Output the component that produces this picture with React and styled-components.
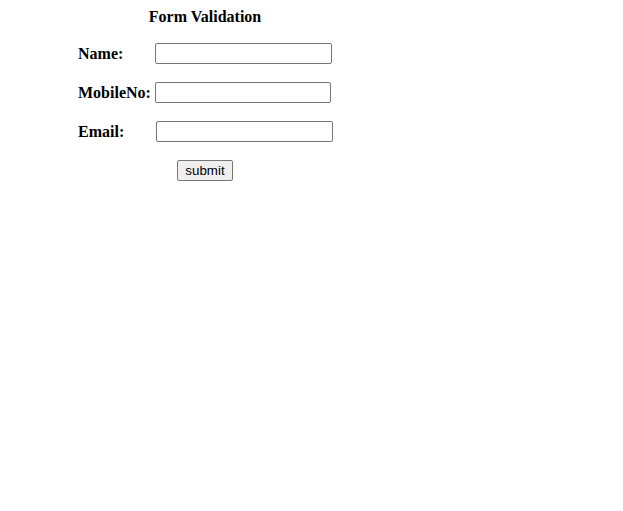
import React, { useState } from "react";
import styled, { createGlobalStyle } from "styled-components";

const GlobalStyle = createGlobalStyle`
  body {
    margin: 8px;
    background: #fff;
    font-family: "Liberation Serif", "Times New Roman", serif;
    color: #000;
  }
`;

const Form = styled.form`
  display: flex;
  flex-direction: column;
  width: 254px;
  margin-left: 70px;
`;

const Title = styled.h4`
  margin: 0 0 17px;
  font-size: 16px;
  line-height: 18px;
  font-weight: bold;
  text-align: center;
`;

const Rows = styled.div`
  display: flex;
  flex-direction: column;
  gap: 18px;
`;

const Row = styled.div`
  display: flex;
  align-items: center;
`;

const Label = styled.label`
  width: ${(p) => p.width}px;
  flex-shrink: 0;
  font-size: 16px;
  font-weight: bold;
  white-space: nowrap;
`;

const Input = styled.input`
  box-sizing: border-box;
  width: ${(p) => p.size}px;
  flex-shrink: 0;
  height: 21px;
  margin: 0;
  padding: 1px 2px;
  border: 1px solid #767676;
  border-radius: 2px;
  background: #fff;
  font-family: "Liberation Sans", Arial, sans-serif;
  font-size: 13.33px;
  outline: none;
`;

const Submit = styled.button`
  align-self: center;
  margin-top: 18px;
  box-sizing: border-box;
  height: 21px;
  width: 56px;
  padding: 1px 6px;
  border: 1px solid #767676;
  border-radius: 2px;
  background: #efefef;
  color: #000;
  font-family: "Liberation Sans", Arial, sans-serif;
  font-size: 13.33px;
  cursor: pointer;
`;

const fields = [
  { name: "name", label: "Name:", width: 77, size: 177 },
  { name: "mobile", label: "MobileNo:", width: 77, size: 176 },
  { name: "email", label: "Email:", width: 78, size: 177 }
];

const App = () => {
  const [values, setValues] = useState({ name: "", mobile: "", email: "" });

  const handleChange = (e) =>
    setValues({ ...values, [e.target.name]: e.target.value });

  return (
    <>
      <GlobalStyle />
      <Form onSubmit={(e) => e.preventDefault()}>
        <Title>Form Validation</Title>
        <Rows>
          {fields.map((field) =>
            <Row key={field.name}>
              <Label width={field.width} htmlFor={field.name}>
                {field.label}
              </Label>
              <Input
                id={field.name}
                name={field.name}
                size={field.size}
                value={values[field.name]}
                onChange={handleChange}
              />
            </Row>
          )}
        </Rows>
        <Submit type="submit">submit</Submit>
      </Form>
    </>
  );
};

export default App;
